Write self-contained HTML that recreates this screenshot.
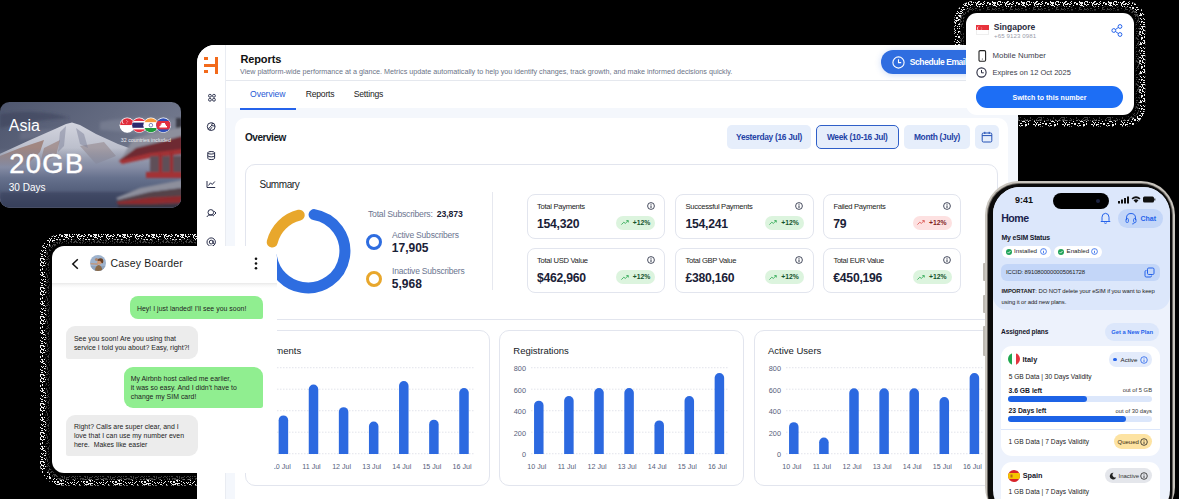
<!DOCTYPE html>
<html><head><meta charset="utf-8">
<style>
*{margin:0;padding:0;box-sizing:border-box}
html,body{width:1179px;height:499px;overflow:hidden;background:#000}
body{position:relative;font-family:"Liberation Sans",sans-serif;color:#1c1f2e}
.a{position:absolute;white-space:nowrap;line-height:1}
.bx{position:absolute}
/* dashboard */
#dash{position:absolute;left:197px;top:45px;width:821px;height:470px;background:#f4f7fc;border-radius:18px 0 0 0;overflow:hidden}
.t-dash{color:#1c1f2e}
.btn{position:absolute;top:125px;height:24px;border-radius:5px;background:#e6eefb;color:#1f42a6;font-size:8.4px;font-weight:bold;letter-spacing:-.3px;display:flex;align-items:center;justify-content:center}
.mc{position:absolute;width:138.5px;height:44.5px;border:1px solid #e2e5ee;border-radius:8px;background:#fff}
.mc .l{position:absolute;left:9.6px;top:6.9px;font-size:7.6px;letter-spacing:-.3px;color:#222;white-space:nowrap}
.mc .v{position:absolute;left:9.5px;top:22px;font-size:12.2px;font-weight:bold;letter-spacing:-.25px;color:#1a2137;white-space:nowrap}
.mc .i{position:absolute;right:9.2px;top:7.1px;width:8px;height:8px}
.mc .bd{position:absolute;right:8.6px;top:20.8px;width:39px;height:14px;border-radius:7px;background:#dcf4de;color:#14532d;font-size:6.8px;font-weight:bold}
.mc .bd.r{background:#fde1e1}
.cc{position:absolute;top:329.7px;width:245px;height:156px;border:1px solid #e2e5ee;border-radius:10px;background:#fff}
</style></head>
<body>
<!-- DASHBOARD -->
<div id="dash">
  <div class="bx" style="left:0;top:0;width:29px;height:470px;background:#fff;border-right:1px solid #e9ecf2"></div>
  <div class="bx" style="left:29px;top:0;width:792px;height:63px;background:#fff"></div>
  <div class="bx" style="left:29px;top:35px;width:792px;height:1px;background:#e5e8ee"></div>
</div>
<!-- sidebar icons -->
<svg class="bx" style="left:200px;top:85px" width="24" height="170" viewBox="0 0 24 170" fill="none" stroke="#1e2340" stroke-width=".95">
 <rect x="8.6" y="9.4" width="2.7" height="2.7" rx="1.1"/><rect x="12.6" y="9.4" width="2.7" height="2.7" rx="1.1"/>
 <rect x="8.6" y="13.4" width="2.7" height="2.7" rx="1.1"/><rect x="12.6" y="13.4" width="2.7" height="2.7" rx="1.1"/>
 <circle cx="11.2" cy="41.6" r="3.9"/><path d="M8.2 44.2 L11.5 40.5 L15 41.2 M11.5 40.5 L12.5 37.8 M9.6 45.3 L12 42.2"/>
 <ellipse cx="11.2" cy="67.8" rx="3.4" ry="1.3"/><path d="M7.8 67.8V73.2Q7.8 74.6 11.2 74.6Q14.6 74.6 14.6 73.2V67.8 M7.8 70.5Q7.8 71.9 11.2 71.9Q14.6 71.9 14.6 70.5"/>
 <path d="M7 96V102.5H15.2 M8.5 100.5L10.5 97.8L12.2 99.5L14.8 96.5"/>
 <circle cx="10.8" cy="127.4" r="2.8"/><path d="M6.8 132Q8 129.5 10.8 129.8Q12.8 129.8 14 131 M14.2 126.2L16 128L14.2 129.8"/>
 <circle cx="11.2" cy="157.1" r="4.2"/><circle cx="11.2" cy="157.1" r="1.9"/><path d="M13.1 155.5V158Q13.6 159.2 14.6 158.6"/>
</svg>
<!-- logo -->
<div class="bx" style="left:215px;top:57px;width:3.3px;height:16.5px;background:#f26a1b"></div>
<div class="bx" style="left:204.3px;top:63.8px;width:13px;height:3.3px;background:#f26a1b"></div>
<div class="bx" style="left:204.3px;top:57px;width:3.5px;height:3.3px;background:#f26a1b"></div>
<div class="bx" style="left:204.3px;top:70.2px;width:3.5px;height:3.3px;background:#f26a1b"></div>

<div class="a" style="left:240.4px;top:53.8px;font-size:11px;font-weight:bold;letter-spacing:-.1px;color:#111">Reports</div>
<div class="a" style="left:240px;top:67.5px;font-size:7.2px;color:#6b7386">View platform-wide performance at a glance. Metrics update automatically to help you identify changes, track growth, and make informed decisions quickly.</div>
<div class="a" style="left:250px;top:89.9px;font-size:8.6px;letter-spacing:-.05px;color:#1f5ad6">Overview</div>
<div class="a" style="left:305.7px;top:89.9px;font-size:8.6px;letter-spacing:-.2px;color:#222">Reports</div>
<div class="a" style="left:353.7px;top:89.9px;font-size:8.6px;letter-spacing:-.2px;color:#222">Settings</div>
<div class="bx" style="left:240px;top:108px;width:56px;height:2px;background:#2563eb"></div>

<!-- schedule email -->
<div class="bx" style="left:881px;top:50px;width:120px;height:24px;border-radius:12px;background:#2f6de0;box-shadow:0 1px 6px rgba(47,109,224,.25)"></div>
<svg class="bx" style="left:891.5px;top:55.5px" width="13" height="13" viewBox="0 0 13 13"><circle cx="6.5" cy="6.5" r="5.6" fill="none" stroke="#fff" stroke-width="1.1"/><path d="M6.5 3.3V6.6H9.2" fill="none" stroke="#fff" stroke-width="1.1"/></svg>
<div class="a" style="left:909.8px;top:57.6px;font-size:8.5px;font-weight:bold;letter-spacing:-.42px;color:#fff">Schedule Email</div>

<!-- content panel -->
<div class="bx" style="left:235px;top:117.5px;width:773px;height:400px;background:#fff;border-radius:10px"></div>
<div class="a" style="left:245px;top:133px;font-size:10px;font-weight:bold;letter-spacing:-.45px;color:#151a26">Overview</div>
<div class="btn" style="left:727px;width:84px">Yesterday (16 Jul)</div>
<div class="btn" style="left:816px;width:82.5px;border:1px solid #2f5fc8">Week (10-16 Jul)</div>
<div class="btn" style="left:904px;width:66px">Month (July)</div>
<div class="btn" style="left:975px;width:23.5px"><svg width="12" height="12" viewBox="0 0 12 12"><rect x="1.2" y="2" width="9.6" height="9" rx="1.2" fill="none" stroke="#2350b5" stroke-width="1"/><path d="M1.2 4.6H10.8M3.8 0.8V3M8.2 0.8V3" stroke="#2350b5" stroke-width="1"/></svg></div>

<!-- summary card -->
<div class="bx" style="left:245.4px;top:163.6px;width:752.3px;height:156px;border:1px solid #e2e5ee;border-radius:10px;background:#fff"></div>
<div class="a" style="left:259.4px;top:180px;font-size:10px;letter-spacing:-.4px;color:#151a26">Summary</div>
<svg class="bx" style="left:259.4px;top:202.4px" width="98" height="98" viewBox="0 0 98 98">
  <circle cx="49" cy="49" r="36.9" fill="none" stroke="#2e6de0" stroke-width="11" stroke-linecap="round" stroke-dasharray="161 1000" transform="rotate(-80.5 49 49)"/>
  <circle cx="49" cy="49" r="36.9" fill="none" stroke="#e8a72c" stroke-width="11" stroke-linecap="round" stroke-dasharray="40 1000" transform="rotate(-166 49 49)"/>
</svg>
<div class="a" style="left:368px;top:209.6px;font-size:8.7px;letter-spacing:-.25px;color:#6b7590">Total Subscribers:</div>
<div class="a" style="left:436.8px;top:209.6px;font-size:8.7px;font-weight:bold;letter-spacing:-.1px;color:#1a2137">23,873</div>
<div class="bx" style="left:365.9px;top:234.3px;width:16px;height:16px;border-radius:50%;border:3.6px solid #2e6de0"></div>
<div class="bx" style="left:365.8px;top:271.2px;width:16px;height:16px;border-radius:50%;border:3.6px solid #e8a72c"></div>
<div class="a" style="left:392px;top:230.5px;font-size:8.5px;letter-spacing:-.2px;color:#6b7590">Active Subscribers</div>
<div class="a" style="left:391.8px;top:242px;font-size:12px;font-weight:bold;color:#1a2137">17,905</div>
<div class="a" style="left:392px;top:267.2px;font-size:8.5px;letter-spacing:-.2px;color:#6b7590">Inactive Subscribers</div>
<div class="a" style="left:391.8px;top:278px;font-size:12px;font-weight:bold;color:#1a2137">5,968</div>
<div class="bx" style="left:491.5px;top:192px;width:1px;height:98px;background:#e6e8ef"></div>

<!-- metric cards -->
<div class="mc" style="left:526.5px;top:194px"><div class="l">Total Payments</div><svg class="i" viewBox="0 0 8 8"><circle cx="4" cy="4" r="3.4" fill="none" stroke="#1a2137" stroke-width=".8"/><path d="M4 3.4V6" stroke="#1a2137" stroke-width=".9"/><circle cx="4" cy="2.2" r=".5" fill="#1a2137"/></svg><div class="v">154,320</div><div class="bd"><svg class="bx" style="left:4.3px;top:4.6px" width="8" height="5" viewBox="0 0 8 5"><path d="M0.4 4.6L2.8 2.2L4.3 3.4L7.2 0.6" fill="none" stroke="#2faa55" stroke-width=".85"/><path d="M5.3 0.6H7.3V2.5" fill="none" stroke="#2faa55" stroke-width=".85"/></svg><span class="a" style="left:16.4px;top:4px;color:#14532d">+12%</span></div></div>
<div class="mc" style="left:675px;top:194px"><div class="l">Successful Payments</div><svg class="i" viewBox="0 0 8 8"><circle cx="4" cy="4" r="3.4" fill="none" stroke="#1a2137" stroke-width=".8"/><path d="M4 3.4V6" stroke="#1a2137" stroke-width=".9"/><circle cx="4" cy="2.2" r=".5" fill="#1a2137"/></svg><div class="v">154,241</div><div class="bd"><svg class="bx" style="left:4.3px;top:4.6px" width="8" height="5" viewBox="0 0 8 5"><path d="M0.4 4.6L2.8 2.2L4.3 3.4L7.2 0.6" fill="none" stroke="#2faa55" stroke-width=".85"/><path d="M5.3 0.6H7.3V2.5" fill="none" stroke="#2faa55" stroke-width=".85"/></svg><span class="a" style="left:16.4px;top:4px;color:#14532d">+12%</span></div></div>
<div class="mc" style="left:822.8px;top:194px"><div class="l">Failed Payments</div><svg class="i" viewBox="0 0 8 8"><circle cx="4" cy="4" r="3.4" fill="none" stroke="#1a2137" stroke-width=".8"/><path d="M4 3.4V6" stroke="#1a2137" stroke-width=".9"/><circle cx="4" cy="2.2" r=".5" fill="#1a2137"/></svg><div class="v">79</div><div class="bd r"><svg class="bx" style="left:4.3px;top:4.6px" width="8" height="5" viewBox="0 0 8 5"><path d="M0.4 4.6L2.8 2.2L4.3 3.4L7.2 0.6" fill="none" stroke="#d9534f" stroke-width=".85"/><path d="M5.3 0.6H7.3V2.5" fill="none" stroke="#d9534f" stroke-width=".85"/></svg><span class="a" style="left:16.4px;top:4px;color:#7f1d1d">+12%</span></div></div>
<div class="mc" style="left:526.5px;top:248.4px"><div class="l">Total USD Value</div><svg class="i" viewBox="0 0 8 8"><circle cx="4" cy="4" r="3.4" fill="none" stroke="#1a2137" stroke-width=".8"/><path d="M4 3.4V6" stroke="#1a2137" stroke-width=".9"/><circle cx="4" cy="2.2" r=".5" fill="#1a2137"/></svg><div class="v">$462,960</div><div class="bd"><svg class="bx" style="left:4.3px;top:4.6px" width="8" height="5" viewBox="0 0 8 5"><path d="M0.4 4.6L2.8 2.2L4.3 3.4L7.2 0.6" fill="none" stroke="#2faa55" stroke-width=".85"/><path d="M5.3 0.6H7.3V2.5" fill="none" stroke="#2faa55" stroke-width=".85"/></svg><span class="a" style="left:16.4px;top:4px;color:#14532d">+12%</span></div></div>
<div class="mc" style="left:675px;top:248.4px"><div class="l">Total GBP Value</div><svg class="i" viewBox="0 0 8 8"><circle cx="4" cy="4" r="3.4" fill="none" stroke="#1a2137" stroke-width=".8"/><path d="M4 3.4V6" stroke="#1a2137" stroke-width=".9"/><circle cx="4" cy="2.2" r=".5" fill="#1a2137"/></svg><div class="v">£380,160</div><div class="bd"><svg class="bx" style="left:4.3px;top:4.6px" width="8" height="5" viewBox="0 0 8 5"><path d="M0.4 4.6L2.8 2.2L4.3 3.4L7.2 0.6" fill="none" stroke="#2faa55" stroke-width=".85"/><path d="M5.3 0.6H7.3V2.5" fill="none" stroke="#2faa55" stroke-width=".85"/></svg><span class="a" style="left:16.4px;top:4px;color:#14532d">+12%</span></div></div>
<div class="mc" style="left:822.8px;top:248.4px"><div class="l">Total EUR Value</div><svg class="i" viewBox="0 0 8 8"><circle cx="4" cy="4" r="3.4" fill="none" stroke="#1a2137" stroke-width=".8"/><path d="M4 3.4V6" stroke="#1a2137" stroke-width=".9"/><circle cx="4" cy="2.2" r=".5" fill="#1a2137"/></svg><div class="v">€450,196</div><div class="bd"><svg class="bx" style="left:4.3px;top:4.6px" width="8" height="5" viewBox="0 0 8 5"><path d="M0.4 4.6L2.8 2.2L4.3 3.4L7.2 0.6" fill="none" stroke="#2faa55" stroke-width=".85"/><path d="M5.3 0.6H7.3V2.5" fill="none" stroke="#2faa55" stroke-width=".85"/></svg><span class="a" style="left:16.4px;top:4px;color:#14532d">+12%</span></div></div>

<!-- chart cards -->
<div class="cc" style="left:245px"></div>
<div class="cc" style="left:499px"></div>
<div class="cc" style="left:754px"></div>
<div class="a" style="left:513.3px;top:346px;font-size:9.5px;color:#151a26">Registrations</div>
<div class="a" style="left:768px;top:346px;font-size:9.5px;color:#151a26">Active Users</div>
<div class="a" style="left:259px;top:346px;font-size:9.5px;color:#151a26">Payments</div>
<svg id="charts" class="bx" style="left:0;top:0;font-family:Liberation Sans" width="1179" height="499"><line x1="531" y1="367.7" x2="727.5" y2="367.7" stroke="#d5d9e2" stroke-width=".7" stroke-dasharray="1.5 1.5"/><line x1="531" y1="389.2" x2="727.5" y2="389.2" stroke="#d5d9e2" stroke-width=".7" stroke-dasharray="1.5 1.5"/><line x1="531" y1="410.7" x2="727.5" y2="410.7" stroke="#d5d9e2" stroke-width=".7" stroke-dasharray="1.5 1.5"/><line x1="531" y1="432.2" x2="727.5" y2="432.2" stroke="#d5d9e2" stroke-width=".7" stroke-dasharray="1.5 1.5"/><line x1="531" y1="453.7" x2="727.5" y2="453.7" stroke="#d5d9e2" stroke-width=".7" stroke-dasharray="1.5 1.5"/><text x="526" y="371.09999999999997" text-anchor="end" font-size="7.3" fill="#56607a">800</text><text x="526" y="392.59999999999997" text-anchor="end" font-size="7.3" fill="#56607a">600</text><text x="526" y="414.09999999999997" text-anchor="end" font-size="7.3" fill="#56607a">400</text><text x="526" y="435.59999999999997" text-anchor="end" font-size="7.3" fill="#56607a">200</text><text x="526" y="457.09999999999997" text-anchor="end" font-size="7.3" fill="#56607a">0</text><path d="M534.05 454.0V405.45A4.75 4.75 0 0 1 543.55 405.45V454.0Z" fill="#2c69e0"/><text x="536.8" y="468.8" text-anchor="middle" font-size="7.1" fill="#56607a">10 Jul</text><path d="M564.15 454.0V400.75A4.75 4.75 0 0 1 573.65 400.75V454.0Z" fill="#2c69e0"/><text x="566.9" y="468.8" text-anchor="middle" font-size="7.1" fill="#56607a">11 Jul</text><path d="M594.25 454.0V392.75A4.75 4.75 0 0 1 603.75 392.75V454.0Z" fill="#2c69e0"/><text x="597.0" y="468.8" text-anchor="middle" font-size="7.1" fill="#56607a">12 Jul</text><path d="M624.3499999999999 454.0V392.75A4.75 4.75 0 0 1 633.8499999999999 392.75V454.0Z" fill="#2c69e0"/><text x="627.0999999999999" y="468.8" text-anchor="middle" font-size="7.1" fill="#56607a">13 Jul</text><path d="M654.4499999999999 454.0V425.15A4.75 4.75 0 0 1 663.9499999999999 425.15V454.0Z" fill="#2c69e0"/><text x="657.1999999999999" y="468.8" text-anchor="middle" font-size="7.1" fill="#56607a">14 Jul</text><path d="M684.55 454.0V400.75A4.75 4.75 0 0 1 694.05 400.75V454.0Z" fill="#2c69e0"/><text x="687.3" y="468.8" text-anchor="middle" font-size="7.1" fill="#56607a">15 Jul</text><path d="M714.65 454.0V377.75A4.75 4.75 0 0 1 724.15 377.75V454.0Z" fill="#2c69e0"/><text x="717.4" y="468.8" text-anchor="middle" font-size="7.1" fill="#56607a">16 Jul</text><line x1="786" y1="367.7" x2="982.5" y2="367.7" stroke="#d5d9e2" stroke-width=".7" stroke-dasharray="1.5 1.5"/><line x1="786" y1="389.2" x2="982.5" y2="389.2" stroke="#d5d9e2" stroke-width=".7" stroke-dasharray="1.5 1.5"/><line x1="786" y1="410.7" x2="982.5" y2="410.7" stroke="#d5d9e2" stroke-width=".7" stroke-dasharray="1.5 1.5"/><line x1="786" y1="432.2" x2="982.5" y2="432.2" stroke="#d5d9e2" stroke-width=".7" stroke-dasharray="1.5 1.5"/><line x1="786" y1="453.7" x2="982.5" y2="453.7" stroke="#d5d9e2" stroke-width=".7" stroke-dasharray="1.5 1.5"/><text x="781" y="371.09999999999997" text-anchor="end" font-size="7.3" fill="#56607a">800</text><text x="781" y="392.59999999999997" text-anchor="end" font-size="7.3" fill="#56607a">600</text><text x="781" y="414.09999999999997" text-anchor="end" font-size="7.3" fill="#56607a">400</text><text x="781" y="435.59999999999997" text-anchor="end" font-size="7.3" fill="#56607a">200</text><text x="781" y="457.09999999999997" text-anchor="end" font-size="7.3" fill="#56607a">0</text><path d="M789.05 454.0V426.95A4.75 4.75 0 0 1 798.55 426.95V454.0Z" fill="#2c69e0"/><text x="791.8" y="468.8" text-anchor="middle" font-size="7.1" fill="#56607a">10 Jul</text><path d="M819.15 454.0V442.35A4.75 4.75 0 0 1 828.65 442.35V454.0Z" fill="#2c69e0"/><text x="821.9" y="468.8" text-anchor="middle" font-size="7.1" fill="#56607a">11 Jul</text><path d="M849.25 454.0V393.05A4.75 4.75 0 0 1 858.75 393.05V454.0Z" fill="#2c69e0"/><text x="852.0" y="468.8" text-anchor="middle" font-size="7.1" fill="#56607a">12 Jul</text><path d="M879.3499999999999 454.0V393.05A4.75 4.75 0 0 1 888.8499999999999 393.05V454.0Z" fill="#2c69e0"/><text x="882.0999999999999" y="468.8" text-anchor="middle" font-size="7.1" fill="#56607a">13 Jul</text><path d="M909.4499999999999 454.0V393.05A4.75 4.75 0 0 1 918.9499999999999 393.05V454.0Z" fill="#2c69e0"/><text x="912.1999999999999" y="468.8" text-anchor="middle" font-size="7.1" fill="#56607a">14 Jul</text><path d="M939.55 454.0V401.85A4.75 4.75 0 0 1 949.05 401.85V454.0Z" fill="#2c69e0"/><text x="942.3" y="468.8" text-anchor="middle" font-size="7.1" fill="#56607a">15 Jul</text><path d="M969.65 454.0V377.75A4.75 4.75 0 0 1 979.15 377.75V454.0Z" fill="#2c69e0"/><text x="972.4" y="468.8" text-anchor="middle" font-size="7.1" fill="#56607a">16 Jul</text><line x1="277" y1="367.7" x2="473.5" y2="367.7" stroke="#d5d9e2" stroke-width=".7" stroke-dasharray="1.5 1.5"/><line x1="277" y1="389.2" x2="473.5" y2="389.2" stroke="#d5d9e2" stroke-width=".7" stroke-dasharray="1.5 1.5"/><line x1="277" y1="410.7" x2="473.5" y2="410.7" stroke="#d5d9e2" stroke-width=".7" stroke-dasharray="1.5 1.5"/><line x1="277" y1="432.2" x2="473.5" y2="432.2" stroke="#d5d9e2" stroke-width=".7" stroke-dasharray="1.5 1.5"/><line x1="277" y1="453.7" x2="473.5" y2="453.7" stroke="#d5d9e2" stroke-width=".7" stroke-dasharray="1.5 1.5"/><text x="272" y="371.09999999999997" text-anchor="end" font-size="7.3" fill="#56607a">800</text><text x="272" y="392.59999999999997" text-anchor="end" font-size="7.3" fill="#56607a">600</text><text x="272" y="414.09999999999997" text-anchor="end" font-size="7.3" fill="#56607a">400</text><text x="272" y="435.59999999999997" text-anchor="end" font-size="7.3" fill="#56607a">200</text><text x="272" y="457.09999999999997" text-anchor="end" font-size="7.3" fill="#56607a">0</text><path d="M278.65000000000003 454.0V420.15A4.75 4.75 0 0 1 288.15000000000003 420.15V454.0Z" fill="#2c69e0"/><text x="281.40000000000003" y="468.8" text-anchor="middle" font-size="7.1" fill="#56607a">10 Jul</text><path d="M308.75000000000006 454.0V389.35A4.75 4.75 0 0 1 318.25000000000006 389.35V454.0Z" fill="#2c69e0"/><text x="311.50000000000006" y="468.8" text-anchor="middle" font-size="7.1" fill="#56607a">11 Jul</text><path d="M338.85 454.0V411.95A4.75 4.75 0 0 1 348.35 411.95V454.0Z" fill="#2c69e0"/><text x="341.6" y="468.8" text-anchor="middle" font-size="7.1" fill="#56607a">12 Jul</text><path d="M368.95000000000005 454.0V426.25A4.75 4.75 0 0 1 378.45000000000005 426.25V454.0Z" fill="#2c69e0"/><text x="371.70000000000005" y="468.8" text-anchor="middle" font-size="7.1" fill="#56607a">13 Jul</text><path d="M399.05000000000007 454.0V385.75A4.75 4.75 0 0 1 408.55000000000007 385.75V454.0Z" fill="#2c69e0"/><text x="401.80000000000007" y="468.8" text-anchor="middle" font-size="7.1" fill="#56607a">14 Jul</text><path d="M429.15000000000003 454.0V424.45A4.75 4.75 0 0 1 438.65000000000003 424.45V454.0Z" fill="#2c69e0"/><text x="431.90000000000003" y="468.8" text-anchor="middle" font-size="7.1" fill="#56607a">15 Jul</text><path d="M459.25000000000006 454.0V392.85A4.75 4.75 0 0 1 468.75000000000006 392.85V454.0Z" fill="#2c69e0"/><text x="462.00000000000006" y="468.8" text-anchor="middle" font-size="7.1" fill="#56607a">16 Jul</text></svg>


<!-- ASIA CARD -->
<svg class="bx" style="left:-0.5px;top:102px" width="182" height="106" viewBox="0 0 182 106">
<defs>
 <clipPath id="ac"><rect x="0" y="0" width="181" height="105.5" rx="9.5"/></clipPath>
 <linearGradient id="sky" x1="0" y1="0" x2="1" y2=".6"><stop offset="0" stop-color="#4e566e"/><stop offset=".5" stop-color="#636a80"/><stop offset="1" stop-color="#7a8094"/></linearGradient>
 <linearGradient id="snow" x1="0" y1="0" x2="0" y2="1"><stop offset="0" stop-color="#d3d5df"/><stop offset=".5" stop-color="#acb0bf"/><stop offset="1" stop-color="#838aa0"/></linearGradient>
 <linearGradient id="mist" x1="0" y1="0" x2="0" y2="1"><stop offset="0" stop-color="#7d8499" stop-opacity="0"/><stop offset=".32" stop-color="#858ca4"/><stop offset=".5" stop-color="#66718d"/><stop offset=".75" stop-color="#515c78"/><stop offset="1" stop-color="#3b4560"/></linearGradient>
 <filter id="bl" x="-10%" y="-10%" width="120%" height="120%"><feGaussianBlur stdDeviation="1.6"/></filter>
 <filter id="bl2" x="-10%" y="-10%" width="120%" height="120%"><feGaussianBlur stdDeviation=".6"/></filter><filter id="bl3" x="-10%" y="-10%" width="120%" height="120%"><feGaussianBlur stdDeviation=".9"/></filter>
</defs>
<g clip-path="url(#ac)">
 <rect width="182" height="106" fill="url(#sky)"/>
 <g filter="url(#bl)">
  <path d="M0 12 Q40 6 70 16 Q30 18 0 26Z" fill="#353c55" opacity=".5"/><path d="M20 30 Q60 24 90 30 Q50 34 20 38Z" fill="#7d8399" opacity=".35"/>
  <path d="M100 20 Q140 12 182 18 V40 Q140 30 100 28Z" fill="#858b9e" opacity=".5"/>
 </g>
 <g filter="url(#bl2)">
  <path d="M-5 54 L30 38 L55 27 L66 22 L72 20.5 L80 23 L96 32 L118 42 L140 50 L182 58 V106 H-5Z" fill="url(#snow)"/>
  <path d="M-5 56 L20 46 L44 38 L40 50 L30 60 L12 70 L-5 74Z" fill="#9a786e" opacity=".8"/>
  <path d="M44 46 L60 38 L56 54 L40 62Z" fill="#957670" opacity=".6"/>
  <path d="M80 44 L104 40 L116 54 L96 62Z" fill="#8c7b80" opacity=".5"/>
  <path d="M60 30 L66 24 L64 44 L58 50Z M76 26 L84 32 L88 46 L80 42Z" fill="#7e8299" opacity=".5"/>
 </g>
 <rect x="0" y="46" width="182" height="60" fill="url(#mist)"/>
 <g filter="url(#bl)"><rect x="0" y="90" width="182" height="16" fill="#323a52" opacity=".5"/></g>
 <!-- pagoda -->
 <g filter="url(#bl3)">
  <path d="M176 16 H182 V28 L176 28Z" fill="#3a3a44"/>
  <path d="M134 36 L160 30 L182 25 V34 L160 40 L136 46 L121 57Z" fill="#8d8f9c"/>
  <path d="M121 57 L136 46 L160 40 L182 34 V48 L150 52 L126 60 L119 60Z" fill="#6e2b30"/>
  <path d="M119 58.5 L150 51 L182 47 V52 L150 56 L122 62Z" fill="#a33134"/>
  <path d="M150 54 H182 V76 H150Z" fill="#5e5058"/>
  <path d="M159 52 H162 V76 H159Z M170 50 H173 V76 H170Z" fill="#9c2c2f"/>
  <path d="M146 70 H182 V76 H146Z" fill="#a33134"/>
  <path d="M116 96 L140 86 L182 78 V86 L150 90 L118 98Z" fill="#8d8f9c"/>
  <path d="M118 98 L150 90 L182 86 V95 L150 96 L117 100Z" fill="#55434a"/>
  <path d="M116 100 L150 95.5 L182 94 V101 L120 103Z" fill="#8e2a2d"/>
  <path d="M118 102 H182 V106 H118Z" fill="#3a3440"/>
 </g>
</g>
</svg>
<div class="a" style="left:8.8px;top:118.3px;font-size:16px;color:#fff">Asia</div>
<div class="a" style="left:9.2px;top:150.2px;font-size:27.3px;letter-spacing:1.4px;-webkit-text-stroke:.45px #fff;color:#fff">20GB</div>
<div class="a" style="left:8.8px;top:183.3px;font-size:10px;color:#fff">30 Days</div>
<svg class="bx" style="left:118px;top:116px" width="56" height="18" viewBox="0 0 56 18">
 <defs>
  <clipPath id="f1"><circle cx="9.2" cy="9.2" r="7"/></clipPath>
  <clipPath id="f2"><circle cx="21.2" cy="9.2" r="7"/></clipPath>
  <clipPath id="f3"><circle cx="32.9" cy="9.2" r="7"/></clipPath>
  <clipPath id="f4"><circle cx="45.3" cy="9.2" r="7"/></clipPath>
 </defs>
 <circle cx="9.2" cy="9.2" r="7.6" fill="#fff"/>
 <g clip-path="url(#f1)"><rect x="0" y="0" width="20" height="9.2" fill="#e02c3a"/><rect x="0" y="9.2" width="20" height="9" fill="#fff"/><path d="M6.6 3.6A2.2 2.2 0 1 0 6.6 7.8A1.8 1.8 0 1 1 6.6 3.6Z" fill="#fff"/><circle cx="8.8" cy="4.6" r=".45" fill="#fff"/><circle cx="9.8" cy="5.8" r=".45" fill="#fff"/><circle cx="8.8" cy="7" r=".45" fill="#fff"/></g>
 <circle cx="21.2" cy="9.2" r="7.6" fill="#fff"/>
 <g clip-path="url(#f2)"><rect x="12" y="0" width="20" height="18" fill="#e63345"/><rect x="12" y="5" width="20" height="8.4" fill="#fff"/><rect x="12" y="6.6" width="20" height="5.2" fill="#2d2a6e"/></g>
 <circle cx="32.9" cy="9.2" r="7.6" fill="#fff"/>
 <g clip-path="url(#f3)"><rect x="24" y="0" width="20" height="6.4" fill="#f59a3a"/><rect x="24" y="6.4" width="20" height="5.6" fill="#fff"/><rect x="24" y="12" width="20" height="6" fill="#1f9a3a"/><circle cx="32.9" cy="9.2" r="1.8" fill="none" stroke="#2a3a8a" stroke-width=".6"/></g>
 <circle cx="45.3" cy="9.2" r="7.6" fill="#fff"/>
 <g clip-path="url(#f4)"><rect x="36" y="0" width="20" height="18" fill="#2f4fb8"/><rect x="36" y="5" width="20" height="8.4" fill="#e23040"/><path d="M41.5 11.5H49V10H48V8.5H47V7H43.5V8.5H42.5V10H41.5Z" fill="#fff"/></g>
</svg>
<div class="a" style="left:120.8px;top:137.6px;font-size:5.3px;color:#e8eaf0">32 countries included</div>



<!-- HALOS over black -->
<svg class="bx" style="left:0;top:0" width="1179" height="499">
 <defs>
  <pattern id="spw" width="29" height="29" patternUnits="userSpaceOnUse"><g fill="#eeeeee"><rect x="6" y="0" width="1" height="1"/><rect x="10" y="0" width="1" height="1"/><rect x="12" y="0" width="1" height="1"/><rect x="15" y="0" width="1" height="1"/><rect x="20" y="0" width="1" height="1"/><rect x="21" y="0" width="1" height="1"/><rect x="23" y="0" width="1" height="1"/><rect x="24" y="0" width="1" height="1"/><rect x="25" y="0" width="1" height="1"/><rect x="26" y="0" width="1" height="1"/><rect x="6" y="1" width="1" height="1"/><rect x="12" y="1" width="1" height="1"/><rect x="13" y="1" width="1" height="1"/><rect x="14" y="1" width="1" height="1"/><rect x="21" y="1" width="1" height="1"/><rect x="22" y="1" width="1" height="1"/><rect x="27" y="1" width="1" height="1"/><rect x="1" y="2" width="1" height="1"/><rect x="2" y="2" width="1" height="1"/><rect x="6" y="2" width="1" height="1"/><rect x="7" y="2" width="1" height="1"/><rect x="8" y="2" width="1" height="1"/><rect x="9" y="2" width="1" height="1"/><rect x="11" y="2" width="1" height="1"/><rect x="14" y="2" width="1" height="1"/><rect x="16" y="2" width="1" height="1"/><rect x="18" y="2" width="1" height="1"/><rect x="20" y="2" width="1" height="1"/><rect x="21" y="2" width="1" height="1"/><rect x="26" y="2" width="1" height="1"/><rect x="1" y="3" width="1" height="1"/><rect x="3" y="3" width="1" height="1"/><rect x="4" y="3" width="1" height="1"/><rect x="7" y="3" width="1" height="1"/><rect x="8" y="3" width="1" height="1"/><rect x="9" y="3" width="1" height="1"/><rect x="11" y="3" width="1" height="1"/><rect x="19" y="3" width="1" height="1"/><rect x="20" y="3" width="1" height="1"/><rect x="23" y="3" width="1" height="1"/><rect x="24" y="3" width="1" height="1"/><rect x="27" y="3" width="1" height="1"/><rect x="3" y="4" width="1" height="1"/><rect x="4" y="4" width="1" height="1"/><rect x="6" y="4" width="1" height="1"/><rect x="8" y="4" width="1" height="1"/><rect x="11" y="4" width="1" height="1"/><rect x="12" y="4" width="1" height="1"/><rect x="14" y="4" width="1" height="1"/><rect x="15" y="4" width="1" height="1"/><rect x="19" y="4" width="1" height="1"/><rect x="21" y="4" width="1" height="1"/><rect x="22" y="4" width="1" height="1"/><rect x="23" y="4" width="1" height="1"/><rect x="25" y="4" width="1" height="1"/><rect x="26" y="4" width="1" height="1"/><rect x="0" y="5" width="1" height="1"/><rect x="7" y="5" width="1" height="1"/><rect x="8" y="5" width="1" height="1"/><rect x="9" y="5" width="1" height="1"/><rect x="13" y="5" width="1" height="1"/><rect x="19" y="5" width="1" height="1"/><rect x="10" y="6" width="1" height="1"/><rect x="20" y="6" width="1" height="1"/><rect x="22" y="6" width="1" height="1"/><rect x="25" y="6" width="1" height="1"/><rect x="1" y="7" width="1" height="1"/><rect x="2" y="7" width="1" height="1"/><rect x="5" y="7" width="1" height="1"/><rect x="6" y="7" width="1" height="1"/><rect x="13" y="7" width="1" height="1"/><rect x="21" y="7" width="1" height="1"/><rect x="27" y="7" width="1" height="1"/><rect x="28" y="7" width="1" height="1"/><rect x="1" y="8" width="1" height="1"/><rect x="2" y="8" width="1" height="1"/><rect x="10" y="8" width="1" height="1"/><rect x="11" y="8" width="1" height="1"/><rect x="13" y="8" width="1" height="1"/><rect x="18" y="8" width="1" height="1"/><rect x="19" y="8" width="1" height="1"/><rect x="21" y="8" width="1" height="1"/><rect x="23" y="8" width="1" height="1"/><rect x="24" y="8" width="1" height="1"/><rect x="25" y="8" width="1" height="1"/><rect x="4" y="9" width="1" height="1"/><rect x="6" y="9" width="1" height="1"/><rect x="7" y="9" width="1" height="1"/><rect x="10" y="9" width="1" height="1"/><rect x="11" y="9" width="1" height="1"/><rect x="20" y="9" width="1" height="1"/><rect x="23" y="9" width="1" height="1"/><rect x="5" y="10" width="1" height="1"/><rect x="10" y="10" width="1" height="1"/><rect x="20" y="10" width="1" height="1"/><rect x="25" y="10" width="1" height="1"/><rect x="27" y="10" width="1" height="1"/><rect x="0" y="11" width="1" height="1"/><rect x="3" y="11" width="1" height="1"/><rect x="4" y="11" width="1" height="1"/><rect x="12" y="11" width="1" height="1"/><rect x="13" y="11" width="1" height="1"/><rect x="15" y="11" width="1" height="1"/><rect x="25" y="11" width="1" height="1"/><rect x="1" y="12" width="1" height="1"/><rect x="5" y="12" width="1" height="1"/><rect x="13" y="12" width="1" height="1"/><rect x="18" y="12" width="1" height="1"/><rect x="20" y="12" width="1" height="1"/><rect x="26" y="12" width="1" height="1"/><rect x="0" y="13" width="1" height="1"/><rect x="2" y="13" width="1" height="1"/><rect x="3" y="13" width="1" height="1"/><rect x="4" y="13" width="1" height="1"/><rect x="9" y="13" width="1" height="1"/><rect x="11" y="13" width="1" height="1"/><rect x="13" y="13" width="1" height="1"/><rect x="14" y="13" width="1" height="1"/><rect x="20" y="13" width="1" height="1"/><rect x="21" y="13" width="1" height="1"/><rect x="28" y="13" width="1" height="1"/><rect x="6" y="14" width="1" height="1"/><rect x="9" y="14" width="1" height="1"/><rect x="10" y="14" width="1" height="1"/><rect x="12" y="14" width="1" height="1"/><rect x="13" y="14" width="1" height="1"/><rect x="17" y="14" width="1" height="1"/><rect x="20" y="14" width="1" height="1"/><rect x="21" y="14" width="1" height="1"/><rect x="25" y="14" width="1" height="1"/><rect x="1" y="15" width="1" height="1"/><rect x="2" y="15" width="1" height="1"/><rect x="3" y="15" width="1" height="1"/><rect x="4" y="15" width="1" height="1"/><rect x="8" y="15" width="1" height="1"/><rect x="9" y="15" width="1" height="1"/><rect x="10" y="15" width="1" height="1"/><rect x="14" y="15" width="1" height="1"/><rect x="15" y="15" width="1" height="1"/><rect x="24" y="15" width="1" height="1"/><rect x="27" y="15" width="1" height="1"/><rect x="2" y="16" width="1" height="1"/><rect x="3" y="16" width="1" height="1"/><rect x="5" y="16" width="1" height="1"/><rect x="16" y="16" width="1" height="1"/><rect x="0" y="17" width="1" height="1"/><rect x="3" y="17" width="1" height="1"/><rect x="7" y="17" width="1" height="1"/><rect x="20" y="17" width="1" height="1"/><rect x="23" y="17" width="1" height="1"/><rect x="25" y="17" width="1" height="1"/><rect x="26" y="17" width="1" height="1"/><rect x="28" y="17" width="1" height="1"/><rect x="0" y="18" width="1" height="1"/><rect x="9" y="18" width="1" height="1"/><rect x="12" y="18" width="1" height="1"/><rect x="14" y="18" width="1" height="1"/><rect x="16" y="18" width="1" height="1"/><rect x="19" y="18" width="1" height="1"/><rect x="25" y="18" width="1" height="1"/><rect x="28" y="18" width="1" height="1"/><rect x="1" y="19" width="1" height="1"/><rect x="2" y="19" width="1" height="1"/><rect x="3" y="19" width="1" height="1"/><rect x="4" y="19" width="1" height="1"/><rect x="5" y="19" width="1" height="1"/><rect x="10" y="19" width="1" height="1"/><rect x="13" y="19" width="1" height="1"/><rect x="18" y="19" width="1" height="1"/><rect x="26" y="19" width="1" height="1"/><rect x="0" y="20" width="1" height="1"/><rect x="1" y="20" width="1" height="1"/><rect x="3" y="20" width="1" height="1"/><rect x="7" y="20" width="1" height="1"/><rect x="15" y="20" width="1" height="1"/><rect x="16" y="20" width="1" height="1"/><rect x="21" y="20" width="1" height="1"/><rect x="27" y="20" width="1" height="1"/><rect x="28" y="20" width="1" height="1"/><rect x="3" y="21" width="1" height="1"/><rect x="4" y="21" width="1" height="1"/><rect x="5" y="21" width="1" height="1"/><rect x="8" y="21" width="1" height="1"/><rect x="10" y="21" width="1" height="1"/><rect x="11" y="21" width="1" height="1"/><rect x="17" y="21" width="1" height="1"/><rect x="21" y="21" width="1" height="1"/><rect x="22" y="21" width="1" height="1"/><rect x="26" y="21" width="1" height="1"/><rect x="28" y="21" width="1" height="1"/><rect x="10" y="22" width="1" height="1"/><rect x="12" y="22" width="1" height="1"/><rect x="13" y="22" width="1" height="1"/><rect x="17" y="22" width="1" height="1"/><rect x="19" y="22" width="1" height="1"/><rect x="20" y="22" width="1" height="1"/><rect x="22" y="22" width="1" height="1"/><rect x="26" y="22" width="1" height="1"/><rect x="27" y="22" width="1" height="1"/><rect x="2" y="23" width="1" height="1"/><rect x="15" y="23" width="1" height="1"/><rect x="21" y="23" width="1" height="1"/><rect x="27" y="23" width="1" height="1"/><rect x="1" y="24" width="1" height="1"/><rect x="2" y="24" width="1" height="1"/><rect x="9" y="24" width="1" height="1"/><rect x="12" y="24" width="1" height="1"/><rect x="13" y="24" width="1" height="1"/><rect x="16" y="24" width="1" height="1"/><rect x="18" y="24" width="1" height="1"/><rect x="21" y="24" width="1" height="1"/><rect x="22" y="24" width="1" height="1"/><rect x="20" y="25" width="1" height="1"/><rect x="24" y="25" width="1" height="1"/><rect x="25" y="25" width="1" height="1"/><rect x="27" y="25" width="1" height="1"/><rect x="0" y="26" width="1" height="1"/><rect x="2" y="26" width="1" height="1"/><rect x="5" y="26" width="1" height="1"/><rect x="6" y="26" width="1" height="1"/><rect x="10" y="26" width="1" height="1"/><rect x="11" y="26" width="1" height="1"/><rect x="12" y="26" width="1" height="1"/><rect x="13" y="26" width="1" height="1"/><rect x="14" y="26" width="1" height="1"/><rect x="17" y="26" width="1" height="1"/><rect x="18" y="26" width="1" height="1"/><rect x="19" y="26" width="1" height="1"/><rect x="20" y="26" width="1" height="1"/><rect x="26" y="26" width="1" height="1"/><rect x="4" y="27" width="1" height="1"/><rect x="5" y="27" width="1" height="1"/><rect x="11" y="27" width="1" height="1"/><rect x="14" y="27" width="1" height="1"/><rect x="15" y="27" width="1" height="1"/><rect x="21" y="27" width="1" height="1"/><rect x="22" y="27" width="1" height="1"/><rect x="24" y="27" width="1" height="1"/><rect x="0" y="28" width="1" height="1"/><rect x="2" y="28" width="1" height="1"/><rect x="4" y="28" width="1" height="1"/><rect x="8" y="28" width="1" height="1"/><rect x="9" y="28" width="1" height="1"/><rect x="11" y="28" width="1" height="1"/><rect x="21" y="28" width="1" height="1"/><rect x="23" y="28" width="1" height="1"/><rect x="26" y="28" width="1" height="1"/></g></pattern><pattern id="spg" width="23" height="23" patternUnits="userSpaceOnUse"><g fill="#404040"><rect x="1" y="0" width="1" height="1"/><rect x="7" y="0" width="1" height="1"/><rect x="13" y="0" width="1" height="1"/><rect x="16" y="0" width="1" height="1"/><rect x="19" y="0" width="1" height="1"/><rect x="22" y="0" width="1" height="1"/><rect x="1" y="1" width="1" height="1"/><rect x="4" y="1" width="1" height="1"/><rect x="8" y="1" width="1" height="1"/><rect x="9" y="1" width="1" height="1"/><rect x="17" y="1" width="1" height="1"/><rect x="18" y="1" width="1" height="1"/><rect x="19" y="1" width="1" height="1"/><rect x="22" y="1" width="1" height="1"/><rect x="3" y="2" width="1" height="1"/><rect x="4" y="2" width="1" height="1"/><rect x="5" y="2" width="1" height="1"/><rect x="6" y="2" width="1" height="1"/><rect x="8" y="2" width="1" height="1"/><rect x="18" y="2" width="1" height="1"/><rect x="2" y="3" width="1" height="1"/><rect x="6" y="3" width="1" height="1"/><rect x="12" y="3" width="1" height="1"/><rect x="18" y="3" width="1" height="1"/><rect x="1" y="4" width="1" height="1"/><rect x="4" y="4" width="1" height="1"/><rect x="5" y="4" width="1" height="1"/><rect x="6" y="4" width="1" height="1"/><rect x="13" y="4" width="1" height="1"/><rect x="15" y="4" width="1" height="1"/><rect x="20" y="4" width="1" height="1"/><rect x="2" y="5" width="1" height="1"/><rect x="4" y="5" width="1" height="1"/><rect x="6" y="5" width="1" height="1"/><rect x="9" y="5" width="1" height="1"/><rect x="11" y="5" width="1" height="1"/><rect x="12" y="5" width="1" height="1"/><rect x="13" y="5" width="1" height="1"/><rect x="0" y="6" width="1" height="1"/><rect x="1" y="6" width="1" height="1"/><rect x="3" y="6" width="1" height="1"/><rect x="6" y="6" width="1" height="1"/><rect x="8" y="6" width="1" height="1"/><rect x="12" y="6" width="1" height="1"/><rect x="14" y="6" width="1" height="1"/><rect x="13" y="7" width="1" height="1"/><rect x="21" y="7" width="1" height="1"/><rect x="22" y="7" width="1" height="1"/><rect x="3" y="8" width="1" height="1"/><rect x="6" y="8" width="1" height="1"/><rect x="9" y="8" width="1" height="1"/><rect x="10" y="8" width="1" height="1"/><rect x="17" y="8" width="1" height="1"/><rect x="21" y="8" width="1" height="1"/><rect x="0" y="9" width="1" height="1"/><rect x="3" y="9" width="1" height="1"/><rect x="4" y="9" width="1" height="1"/><rect x="5" y="9" width="1" height="1"/><rect x="7" y="9" width="1" height="1"/><rect x="13" y="9" width="1" height="1"/><rect x="14" y="9" width="1" height="1"/><rect x="21" y="9" width="1" height="1"/><rect x="22" y="9" width="1" height="1"/><rect x="2" y="10" width="1" height="1"/><rect x="6" y="10" width="1" height="1"/><rect x="9" y="10" width="1" height="1"/><rect x="11" y="10" width="1" height="1"/><rect x="13" y="10" width="1" height="1"/><rect x="14" y="10" width="1" height="1"/><rect x="20" y="10" width="1" height="1"/><rect x="1" y="11" width="1" height="1"/><rect x="2" y="11" width="1" height="1"/><rect x="5" y="11" width="1" height="1"/><rect x="6" y="11" width="1" height="1"/><rect x="7" y="11" width="1" height="1"/><rect x="14" y="11" width="1" height="1"/><rect x="18" y="11" width="1" height="1"/><rect x="20" y="11" width="1" height="1"/><rect x="2" y="12" width="1" height="1"/><rect x="4" y="12" width="1" height="1"/><rect x="5" y="12" width="1" height="1"/><rect x="7" y="12" width="1" height="1"/><rect x="8" y="12" width="1" height="1"/><rect x="10" y="12" width="1" height="1"/><rect x="11" y="12" width="1" height="1"/><rect x="13" y="12" width="1" height="1"/><rect x="16" y="12" width="1" height="1"/><rect x="22" y="12" width="1" height="1"/><rect x="11" y="13" width="1" height="1"/><rect x="13" y="13" width="1" height="1"/><rect x="15" y="13" width="1" height="1"/><rect x="20" y="13" width="1" height="1"/><rect x="22" y="13" width="1" height="1"/><rect x="2" y="14" width="1" height="1"/><rect x="7" y="14" width="1" height="1"/><rect x="8" y="14" width="1" height="1"/><rect x="9" y="14" width="1" height="1"/><rect x="13" y="14" width="1" height="1"/><rect x="15" y="14" width="1" height="1"/><rect x="20" y="14" width="1" height="1"/><rect x="21" y="14" width="1" height="1"/><rect x="0" y="15" width="1" height="1"/><rect x="4" y="15" width="1" height="1"/><rect x="6" y="15" width="1" height="1"/><rect x="8" y="15" width="1" height="1"/><rect x="9" y="15" width="1" height="1"/><rect x="10" y="15" width="1" height="1"/><rect x="14" y="15" width="1" height="1"/><rect x="17" y="15" width="1" height="1"/><rect x="19" y="15" width="1" height="1"/><rect x="0" y="16" width="1" height="1"/><rect x="3" y="16" width="1" height="1"/><rect x="4" y="16" width="1" height="1"/><rect x="6" y="16" width="1" height="1"/><rect x="8" y="16" width="1" height="1"/><rect x="10" y="16" width="1" height="1"/><rect x="11" y="16" width="1" height="1"/><rect x="15" y="16" width="1" height="1"/><rect x="16" y="16" width="1" height="1"/><rect x="18" y="16" width="1" height="1"/><rect x="2" y="17" width="1" height="1"/><rect x="5" y="17" width="1" height="1"/><rect x="16" y="17" width="1" height="1"/><rect x="18" y="17" width="1" height="1"/><rect x="20" y="17" width="1" height="1"/><rect x="21" y="17" width="1" height="1"/><rect x="22" y="17" width="1" height="1"/><rect x="6" y="18" width="1" height="1"/><rect x="8" y="18" width="1" height="1"/><rect x="11" y="18" width="1" height="1"/><rect x="12" y="18" width="1" height="1"/><rect x="13" y="18" width="1" height="1"/><rect x="14" y="18" width="1" height="1"/><rect x="18" y="18" width="1" height="1"/><rect x="20" y="18" width="1" height="1"/><rect x="3" y="19" width="1" height="1"/><rect x="6" y="19" width="1" height="1"/><rect x="11" y="19" width="1" height="1"/><rect x="13" y="19" width="1" height="1"/><rect x="14" y="19" width="1" height="1"/><rect x="15" y="19" width="1" height="1"/><rect x="17" y="19" width="1" height="1"/><rect x="21" y="19" width="1" height="1"/><rect x="0" y="20" width="1" height="1"/><rect x="3" y="20" width="1" height="1"/><rect x="4" y="20" width="1" height="1"/><rect x="5" y="20" width="1" height="1"/><rect x="10" y="20" width="1" height="1"/><rect x="11" y="20" width="1" height="1"/><rect x="13" y="20" width="1" height="1"/><rect x="14" y="20" width="1" height="1"/><rect x="15" y="20" width="1" height="1"/><rect x="20" y="20" width="1" height="1"/><rect x="0" y="21" width="1" height="1"/><rect x="5" y="21" width="1" height="1"/><rect x="7" y="21" width="1" height="1"/><rect x="10" y="21" width="1" height="1"/><rect x="14" y="21" width="1" height="1"/><rect x="15" y="21" width="1" height="1"/><rect x="18" y="21" width="1" height="1"/><rect x="20" y="21" width="1" height="1"/><rect x="21" y="21" width="1" height="1"/><rect x="1" y="22" width="1" height="1"/><rect x="6" y="22" width="1" height="1"/><rect x="9" y="22" width="1" height="1"/><rect x="11" y="22" width="1" height="1"/><rect x="16" y="22" width="1" height="1"/><rect x="17" y="22" width="1" height="1"/><rect x="21" y="22" width="1" height="1"/></g></pattern>
  <clipPath id="offdash"><path d="M0 0H1179V499H0Z M197 45H1018V499H197Z" clip-rule="evenodd"/></clipPath>
 </defs>
 <g clip-path="url(#offdash)" fill="none">
  <rect x="43" y="237" width="243" height="245.4" rx="19" stroke="url(#spw)" stroke-width="6"/>
  <rect x="47.5" y="241.5" width="234" height="236.4" rx="15" stroke="url(#spg)" stroke-width="4"/>
  <rect x="957.25" y="4" width="185" height="119.5" rx="17" stroke="url(#spw)" stroke-width="6"/>
  <rect x="961.75" y="8.5" width="176" height="110.5" rx="13" stroke="url(#spg)" stroke-width="4"/>
 </g>
</svg>
<!-- CHAT CARD -->
<div class="bx" style="left:52px;top:246px;width:225px;height:227.4px;border-radius:12px;background:#fff;overflow:hidden">
  <div class="bx" style="left:0;top:36.5px;width:225px;height:5px;background:linear-gradient(#e9e9e9,#f6f6f6 40%,#fff)"></div>
</div>
<svg class="bx" style="left:70px;top:257px" width="10" height="14" viewBox="0 0 10 14"><path d="M7.8 2.2L2.8 7L7.8 11.8" fill="none" stroke="#111" stroke-width="1.5"/></svg>
<svg class="bx" style="left:90px;top:255.4px" width="16" height="16" viewBox="0 0 16 16">
 <defs><clipPath id="av"><circle cx="8" cy="8" r="8"/></clipPath></defs>
 <g clip-path="url(#av)"><rect width="16" height="16" fill="#9db2cc"/><rect y="11" width="16" height="5" fill="#8ea2bc"/>
 <path d="M5 16 Q5 11 8.5 10 Q12 10.5 12.5 16Z" fill="#8a6a48"/><circle cx="9.6" cy="7.2" r="2.4" fill="#d09a78"/><path d="M7 5 Q9 2.5 12 3.5 Q14 5 13 8 Q12 9 11 7 Q10 5 8 6Z" fill="#6b4226"/><path d="M0.5 8.2 L8 8.6 L8 9.8 L0.5 9.2Z" fill="#c8906a"/><circle cx="6.5" cy="4.5" r="1.6" fill="#b07a58" opacity=".8"/></g>
</svg>
<div class="a" style="left:110.4px;top:258.4px;font-size:10.5px;letter-spacing:.2px;color:#1b1b1b">Casey Boarder</div>
<svg class="bx" style="left:252.5px;top:257px" width="6" height="13" viewBox="0 0 6 13"><circle cx="3" cy="1.8" r="1.3" fill="#111"/><circle cx="3" cy="6.5" r="1.3" fill="#111"/><circle cx="3" cy="11.2" r="1.3" fill="#111"/></svg>

<div class="bx" style="left:129.6px;top:296px;width:133.3px;height:23.3px;border-radius:8px 8px 2px 8px;background:#90ee90"></div>
<div class="a" style="left:137px;top:305.5px;font-size:6.9px;letter-spacing:.03px;color:#222">Hey! I just landed! I'll see you soon!</div>

<div class="bx" style="left:66.3px;top:326.3px;width:132px;height:32.8px;border-radius:9px 9px 9px 2.5px;background:#ececec"></div>
<div class="a" style="left:73.9px;top:335.2px;font-size:6.9px;line-height:8.66px;letter-spacing:.03px;color:#222">See you soon! Are you using that<br>service I told you about? Easy, right?!</div>

<div class="bx" style="left:123.6px;top:366.5px;width:139.4px;height:41px;border-radius:9px 9px 2.5px 9px;background:#90ee90"></div>
<div class="a" style="left:130.7px;top:375.2px;font-size:6.9px;line-height:8.66px;letter-spacing:.03px;color:#222">My Airbnb host called me earlier,<br>it was so easy. And I didn't have to<br>change my SIM card!</div>

<div class="bx" style="left:66.3px;top:415.3px;width:131.4px;height:41px;border-radius:9px 9px 9px 2.5px;background:#ececec"></div>
<div class="a" style="left:73.9px;top:423.3px;font-size:6.9px;line-height:8.66px;letter-spacing:.03px;color:#222">Right? Calls are super clear, and I<br>love that I can use my number even<br>here.&nbsp; Makes like easier</div>

<!-- SINGAPORE CARD -->
<div class="bx" style="left:966.25px;top:13px;width:167.6px;height:101.5px;border-radius:11px;background:#fff"></div>
<div class="bx" style="left:975.5px;top:25px;width:13.5px;height:5.3px;background:#e8323c"></div>
<div class="bx" style="left:975.5px;top:30.3px;width:13.5px;height:5.2px;background:#fff;border:0.5px solid #eee;border-top:none"></div>
<svg class="bx" style="left:976.5px;top:25.6px" width="6" height="5" viewBox="0 0 6 5"><path d="M2.6 .6A1.9 1.9 0 1 0 2.6 4.2A1.5 1.5 0 1 1 2.6 .6Z" fill="#fff"/><circle cx="4.2" cy="1.5" r=".35" fill="#fff"/><circle cx="4.9" cy="2.5" r=".35" fill="#fff"/><circle cx="4.2" cy="3.4" r=".35" fill="#fff"/></svg>
<div class="a" style="left:993.75px;top:22.5px;font-size:8.5px;font-weight:bold;color:#2a2c40">Singapore</div>
<div class="a" style="left:994px;top:33px;font-size:6.1px;letter-spacing:.1px;color:#9a9caa">+65 9123 0981</div>
<svg class="bx" style="left:1110.6px;top:24px" width="12" height="13" viewBox="0 0 12 13"><circle cx="9" cy="2.5" r="1.9" fill="none" stroke="#2563eb" stroke-width="1"/><circle cx="2.8" cy="6.5" r="1.9" fill="none" stroke="#2563eb" stroke-width="1"/><circle cx="9" cy="10.5" r="1.9" fill="none" stroke="#2563eb" stroke-width="1"/><path d="M4.5 5.5L7.3 3.5M4.5 7.5L7.3 9.5" stroke="#2563eb" stroke-width="1"/></svg>
<svg class="bx" style="left:977.5px;top:49.5px" width="9" height="12" viewBox="0 0 9 12"><rect x="1" y=".6" width="6.6" height="10.6" rx="1.2" fill="none" stroke="#222" stroke-width="1.1"/><circle cx="4.3" cy="9" r=".5" fill="#222"/></svg>
<div class="a" style="left:992.5px;top:51.9px;font-size:7.8px;letter-spacing:.05px;color:#3a3c4a">Mobile Number</div>
<svg class="bx" style="left:975.8px;top:66.5px" width="11" height="11" viewBox="0 0 11 11"><circle cx="5.5" cy="5.5" r="4.6" fill="none" stroke="#2a2c40" stroke-width="1.1"/><path d="M5.5 3V5.8H7.8" fill="none" stroke="#2a2c40" stroke-width="1"/></svg>
<div class="a" style="left:992.5px;top:68.5px;font-size:7.5px;color:#3a3c4a">Expires on 12 Oct 2025</div>
<div class="bx" style="left:975.75px;top:86.25px;width:147.5px;height:21.3px;border-radius:11px;background:#1d6ef5"></div>
<div class="a" style="left:975.75px;top:93.5px;width:147.5px;text-align:center;font-size:7px;font-weight:bold;letter-spacing:.05px;color:#fff">Switch to this number</div>


<!-- PHONE -->
<div class="bx" style="left:983.4px;top:262.5px;width:2.4px;height:18.3px;border-radius:1px;background:#bdb9b2"></div>
<div class="bx" style="left:983.4px;top:295px;width:2.4px;height:18px;border-radius:1px;background:#bdb9b2"></div>
<div class="bx" style="left:983.4px;top:326px;width:2.4px;height:29.5px;border-radius:1px;background:#bdb9b2"></div>
<div class="bx" style="left:985px;top:180.5px;width:190px;height:340px;border-radius:34px;background:#c8c4bd"></div>
<div class="bx" style="left:987.2px;top:182.7px;width:185.6px;height:340px;border-radius:32px;background:#6a6661"></div>
<div class="bx" style="left:988.2px;top:183.7px;width:183.6px;height:340px;border-radius:31px;background:#0b0b0b"></div>
<div class="bx" style="left:992.5px;top:187px;width:177.5px;height:330px;border-radius:27px;background:#edf2fc;overflow:hidden">
  <div class="bx" style="left:0;top:0;width:177.5px;height:123px;background:#dce7fb;border-radius:0 0 14px 14px"></div>
</div>
<div class="bx" style="left:1053px;top:192.5px;width:56px;height:16.3px;border-radius:8.2px;background:#000"></div>
<div class="bx" style="left:1096px;top:198.5px;width:4px;height:4px;border-radius:50%;background:#1c2340"></div>
<div class="a" style="left:1015px;top:195.5px;font-size:9px;font-weight:bold;color:#111">9:41</div>
<svg class="bx" style="left:1118px;top:195px" width="38" height="9" viewBox="0 0 38 9">
 <rect x="0" y="6" width="2" height="2.5" fill="#111"/><rect x="3" y="4.5" width="2" height="4" fill="#111"/><rect x="6" y="3" width="2" height="5.5" fill="#111"/><rect x="9" y="1.5" width="2" height="7" fill="#111"/>
 <path d="M13.5 3.2Q18 -0.5 22.5 3.2L21.3 4.5Q18 1.8 14.7 4.5Z M15.5 5.3Q18 3.3 20.5 5.3L18 8Z" fill="#111"/>
 <rect x="25" y="1.5" width="11" height="6" rx="1.5" fill="#111"/><rect x="36.3" y="3.5" width="1" height="2" fill="#111"/>
</svg>
<div class="a" style="left:1001.25px;top:213px;font-size:10.6px;font-weight:bold;letter-spacing:-.55px;color:#1b1f4e">Home</div>
<svg class="bx" style="left:1099.5px;top:211.5px" width="11" height="12" viewBox="0 0 11 12"><path d="M2 8.5V5.2Q2 1.6 5.5 1.3Q9 1.6 9 5.2V8.5L10 9.5H1Z" fill="none" stroke="#2563eb" stroke-width="1"/><path d="M4.2 10.8Q5.5 12 6.8 10.8" fill="none" stroke="#2563eb" stroke-width="1"/></svg>
<div class="bx" style="left:1118px;top:209.25px;width:45.3px;height:18.3px;border-radius:9.2px;background:#c3d6f8"></div>
<svg class="bx" style="left:1125px;top:212px" width="12" height="13" viewBox="0 0 12 13"><path d="M1.5 8V6Q1.5 1.5 6 1.5Q10.5 1.5 10.5 6V8" fill="none" stroke="#2563eb" stroke-width="1"/><rect x="1" y="6.5" width="2.4" height="4" rx="1" fill="none" stroke="#2563eb" stroke-width=".9"/><rect x="8.6" y="6.5" width="2.4" height="4" rx="1" fill="none" stroke="#2563eb" stroke-width=".9"/><path d="M9.8 10.5Q9.5 12 7 12" fill="none" stroke="#2563eb" stroke-width=".8"/></svg>
<div class="a" style="left:1140.5px;top:215px;font-size:7px;font-weight:bold;color:#2563eb">Chat</div>
<div class="a" style="left:1001.5px;top:234.8px;font-size:6.9px;font-weight:bold;letter-spacing:-.15px;color:#15172a">My eSIM Status</div>
<div class="bx" style="left:1001.75px;top:245.5px;width:48.75px;height:12px;border-radius:6px;background:#fff"></div>
<div class="bx" style="left:1054.25px;top:245.5px;width:47.5px;height:12px;border-radius:6px;background:#fff"></div>
<svg class="bx" style="left:1005.5px;top:248.5px" width="6" height="6" viewBox="0 0 6 6"><circle cx="3" cy="3" r="3" fill="#22a35a"/><path d="M1.6 3.1L2.6 4.1L4.5 2" fill="none" stroke="#fff" stroke-width=".8"/></svg>
<div class="a" style="left:1014px;top:248.3px;font-size:6.2px;color:#222">Installed</div>
<svg class="bx" style="left:1039.5px;top:248px" width="7" height="7" viewBox="0 0 7 7"><circle cx="3.5" cy="3.5" r="2.9" fill="none" stroke="#2563eb" stroke-width=".8"/><path d="M3.5 3V5.2" stroke="#2563eb" stroke-width=".8"/><circle cx="3.5" cy="1.9" r=".45" fill="#2563eb"/></svg>
<svg class="bx" style="left:1058px;top:248.5px" width="6" height="6" viewBox="0 0 6 6"><circle cx="3" cy="3" r="3" fill="#22a35a"/><path d="M1.6 3.1L2.6 4.1L4.5 2" fill="none" stroke="#fff" stroke-width=".8"/></svg>
<div class="a" style="left:1066.5px;top:248.3px;font-size:6.2px;color:#222">Enabled</div>
<svg class="bx" style="left:1090.5px;top:248px" width="7" height="7" viewBox="0 0 7 7"><circle cx="3.5" cy="3.5" r="2.9" fill="none" stroke="#2563eb" stroke-width=".8"/><path d="M3.5 3V5.2" stroke="#2563eb" stroke-width=".8"/><circle cx="3.5" cy="1.9" r=".45" fill="#2563eb"/></svg>
<div class="bx" style="left:1001.25px;top:263.75px;width:158.25px;height:17px;border-radius:6px;background:#c3d6f8"></div>
<div class="a" style="left:1006px;top:269.5px;font-size:5.9px;letter-spacing:-.1px;color:#222">ICCID: 8910800000005061728</div>
<svg class="bx" style="left:1144px;top:266.5px" width="11" height="11" viewBox="0 0 11 11"><rect x="3.5" y="1" width="6.5" height="6.5" rx="1.2" fill="none" stroke="#2563eb" stroke-width="1"/><path d="M2.5 3.5H2.2Q1 3.5 1 4.7V8.8Q1 10 2.2 10H6.3Q7.5 10 7.5 8.8V8.5" fill="none" stroke="#2563eb" stroke-width="1"/></svg>
<div class="a" style="left:1001.5px;top:286.2px;font-size:5.9px;line-height:10.8px;letter-spacing:-.08px;color:#222"><b>IMPORTANT</b>: DO NOT delete your eSIM if you want to keep<br>using it or add new plans.</div>
<div class="a" style="left:1001px;top:328.8px;font-size:6.6px;font-weight:bold;letter-spacing:-.1px;color:#15172a">Assigned plans</div>
<div class="bx" style="left:1104.5px;top:323px;width:54.8px;height:18px;border-radius:9px;background:#dce7fb"></div>
<div class="a" style="left:1105px;top:329.7px;width:54.3px;text-align:center;font-size:5.8px;font-weight:bold;color:#2563eb">Get a New Plan</div>
<!-- italy card -->
<div class="bx" style="left:1001px;top:346.2px;width:158.7px;height:110.2px;border-radius:11px;background:#fff"></div>
<svg class="bx" style="left:1008px;top:353.4px" width="12" height="12" viewBox="0 0 12 12"><defs><clipPath id="it"><circle cx="6" cy="6" r="6"/></clipPath></defs><g clip-path="url(#it)"><rect width="4" height="12" fill="#1fa84f"/><rect x="4" width="4" height="12" fill="#fff"/><rect x="8" width="4" height="12" fill="#e3343f"/></g></svg>
<div class="a" style="left:1022.6px;top:355.8px;font-size:7.3px;font-weight:bold;color:#15172a">Italy</div>
<div class="bx" style="left:1108.5px;top:352.2px;width:43.3px;height:14.4px;border-radius:7.2px;background:#e3ebfb"></div>
<div class="bx" style="left:1113px;top:357.6px;width:3.6px;height:3.6px;border-radius:50%;background:#2563eb"></div>
<div class="a" style="left:1120.5px;top:356.5px;font-size:6.2px;color:#222">Active</div>
<svg class="bx" style="left:1139.5px;top:355.5px" width="8" height="8" viewBox="0 0 8 8"><circle cx="4" cy="4" r="3.3" fill="none" stroke="#2563eb" stroke-width=".8"/><path d="M4 3.5V6" stroke="#2563eb" stroke-width=".8"/><circle cx="4" cy="2.2" r=".45" fill="#2563eb"/></svg>
<div class="a" style="left:1008.7px;top:374.3px;font-size:6.6px;color:#222">5 GB Data | 30 Days Validity</div>
<div class="a" style="left:1008.5px;top:387.5px;font-size:6.8px;font-weight:bold;color:#15172a">3.6 GB left</div>
<div class="a" style="left:1152px;top:388px;font-size:5.8px;color:#333;transform:translateX(-100%)">out of 5 GB</div>
<div class="bx" style="left:1008.4px;top:396.2px;width:143.6px;height:5.8px;border-radius:3px;background:#dce7fb"></div>
<div class="bx" style="left:1008.4px;top:396.2px;width:78.8px;height:5.8px;border-radius:3px;background:#1d63e6"></div>
<div class="a" style="left:1008.5px;top:408px;font-size:6.8px;font-weight:bold;color:#15172a">23 Days left</div>
<div class="a" style="left:1152px;top:408.5px;font-size:5.8px;color:#333;transform:translateX(-100%)">out of 30 days</div>
<div class="bx" style="left:1008.4px;top:416.3px;width:143.6px;height:5.8px;border-radius:3px;background:#dce7fb"></div>
<div class="bx" style="left:1008.4px;top:416.3px;width:117.6px;height:5.8px;border-radius:3px;background:#1d63e6"></div>
<div class="bx" style="left:1001px;top:429px;width:158.7px;height:.8px;background:#dce7fb"></div>
<div class="a" style="left:1008.5px;top:438.8px;font-size:6.6px;letter-spacing:.05px;color:#222">1 GB Data | 7 Days Validity</div>
<div class="bx" style="left:1114px;top:434.4px;width:38px;height:14.8px;border-radius:7.4px;background:#fde3a2"></div>
<div class="a" style="left:1117.5px;top:439px;font-size:6px;color:#3a2a10">Queued</div>
<svg class="bx" style="left:1140px;top:437.8px" width="8" height="8" viewBox="0 0 8 8"><circle cx="4" cy="4" r="3.3" fill="none" stroke="#222" stroke-width=".8"/><path d="M4 3.5V6" stroke="#222" stroke-width=".8"/><circle cx="4" cy="2.2" r=".45" fill="#222"/></svg>
<!-- spain card -->
<div class="bx" style="left:1001px;top:462.3px;width:159px;height:60px;border-radius:11px;background:#fff"></div>
<svg class="bx" style="left:1008px;top:469.5px" width="12" height="12" viewBox="0 0 12 12"><defs><clipPath id="es"><circle cx="6" cy="6" r="6"/></clipPath></defs><g clip-path="url(#es)"><rect width="12" height="12" fill="#d8232a"/><rect y="3" width="12" height="6" fill="#f5c400"/><rect x="2.5" y="4.5" width="2" height="3" fill="#b5651d"/></g></svg>
<div class="a" style="left:1022.7px;top:472px;font-size:7.3px;font-weight:bold;color:#15172a">Spain</div>
<div class="bx" style="left:1104.6px;top:468.3px;width:47.4px;height:14.8px;border-radius:7.4px;background:#e4e6eb"></div>
<svg class="bx" style="left:1109px;top:472px" width="8" height="8" viewBox="0 0 8 8"><path d="M4.5 .8A3.3 3.3 0 1 0 7.2 5.2A2.6 2.6 0 0 1 4.5 .8Z" fill="#222"/></svg>
<div class="a" style="left:1118.5px;top:473px;font-size:6px;color:#333">Inactive</div>
<svg class="bx" style="left:1140px;top:471.7px" width="8" height="8" viewBox="0 0 8 8"><circle cx="4" cy="4" r="3.3" fill="none" stroke="#222" stroke-width=".8"/><path d="M4 3.5V6" stroke="#222" stroke-width=".8"/><circle cx="4" cy="2.2" r=".45" fill="#222"/></svg>
<div class="a" style="left:1008.5px;top:489.3px;font-size:6.6px;letter-spacing:.05px;color:#222">1 GB Data | 7 Days Validity</div>

</body></html>
